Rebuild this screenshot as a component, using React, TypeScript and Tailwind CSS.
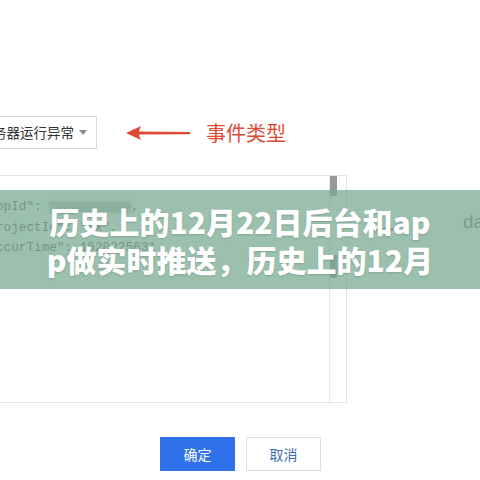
const CodeLine = ({ children }: { children: React.ReactNode }) => (
  <div className="h-[20.5px] leading-[20.5px] whitespace-nowrap">{children}</div>
);

const App = () => {
  return (
    <div className="relative w-[480px] h-[480px] overflow-hidden bg-white font-['Noto_Sans_CJK_SC',sans-serif]">
      <div className="pt-[116px]">
        {/* event type select + annotation */}
        <div className="flex items-center h-[33px]">
          <div className="ml-[-20px] w-[117px] h-[33px] shrink-0 border border-[#d9d9d9] flex items-center justify-between pl-[12px] pr-[9px] text-[13.5px] text-[#333]">
            <span className="whitespace-nowrap">务器运行异常</span>
            <svg width="8" height="5" viewBox="0 0 8 5">
              <polygon points="0,0 8,0 4,5" fill="#8c8c8c" />
            </svg>
          </div>
          <svg className="ml-[27px] shrink-0" width="68" height="18" viewBox="0 0 68 18">
            <path d="M13 7.6 L66 8 L66 10.2 L13 10.6 Z" fill="#df4a33" />
            <path d="M2 9 L17 2 Q13 9 17 16 Z" fill="#df4a33" />
          </svg>
          <span className="ml-[14px] text-[20px] leading-none text-[#dc4a35] whitespace-nowrap">事件类型</span>
        </div>

        {/* json textarea */}
        <div className="flex items-start mt-[26px]">
          <div className="ml-[-2px] w-[349px] h-[228px] shrink-0 border border-[#e3e3e3] flex">
            <div className="flex-1 pt-[21px] ml-[-3px] font-['Liberation_Mono',monospace] text-[12.7px] text-[#555]">
              <CodeLine>
                opId": <span className="inline-block align-middle w-[82px] h-[12px] bg-[#8d9691] opacity-60 blur-[1px]" />,
              </CodeLine>
              <CodeLine>rojectId": "xx",</CodeLine>
              <CodeLine>ccurTime": 1620225631</CodeLine>
            </div>
            <div className="w-[17px] shrink-0 border-l border-[#e8e8e8]">
              <div className="w-[7px] h-[20px] bg-[#999]" />
              <div className="mt-[59px] w-[7px] h-[23px] bg-[#999]" />
            </div>
          </div>
          <div className="flex items-start ml-[27px] shrink-0">
            <svg className="mt-[49px] shrink-0" width="26" height="10" viewBox="0 0 26 10">
              <path d="M0 5 L7 1 L6 4 L26 4 L26 6.5 L6 6.5 L7 9 Z" fill="#b8573f" />
            </svg>
            <span className="ml-[63px] mt-[37px] text-[19px] leading-none text-[#6f6f6f] font-['Liberation_Sans',sans-serif] whitespace-nowrap">
              data
            </span>
          </div>
        </div>

        {/* actions */}
        <div className="flex gap-[11px] mt-[34px] pl-[160px]">
          <button className="w-[75px] h-[34px] bg-[#2e71ea] text-white text-[14px]">确定</button>
          <button className="w-[75px] h-[34px] bg-white border border-[#dedede] text-[#3f6cb0] text-[14px]">取消</button>
        </div>
      </div>

      {/* title banner */}
      <div className="absolute top-[190px] left-0 w-full h-[99px] bg-[rgba(123,171,147,0.75)] flex flex-col items-center justify-center">
        <div className="text-white font-black text-[30px] leading-[38px] text-center [text-shadow:0_1px_2px_rgba(0,0,0,0.15)]">
          <div>历史上的12月22日后台和ap</div>
          <div>p做实时推送，历史上的12月</div>
        </div>
      </div>
    </div>
  );
};

export default App;
